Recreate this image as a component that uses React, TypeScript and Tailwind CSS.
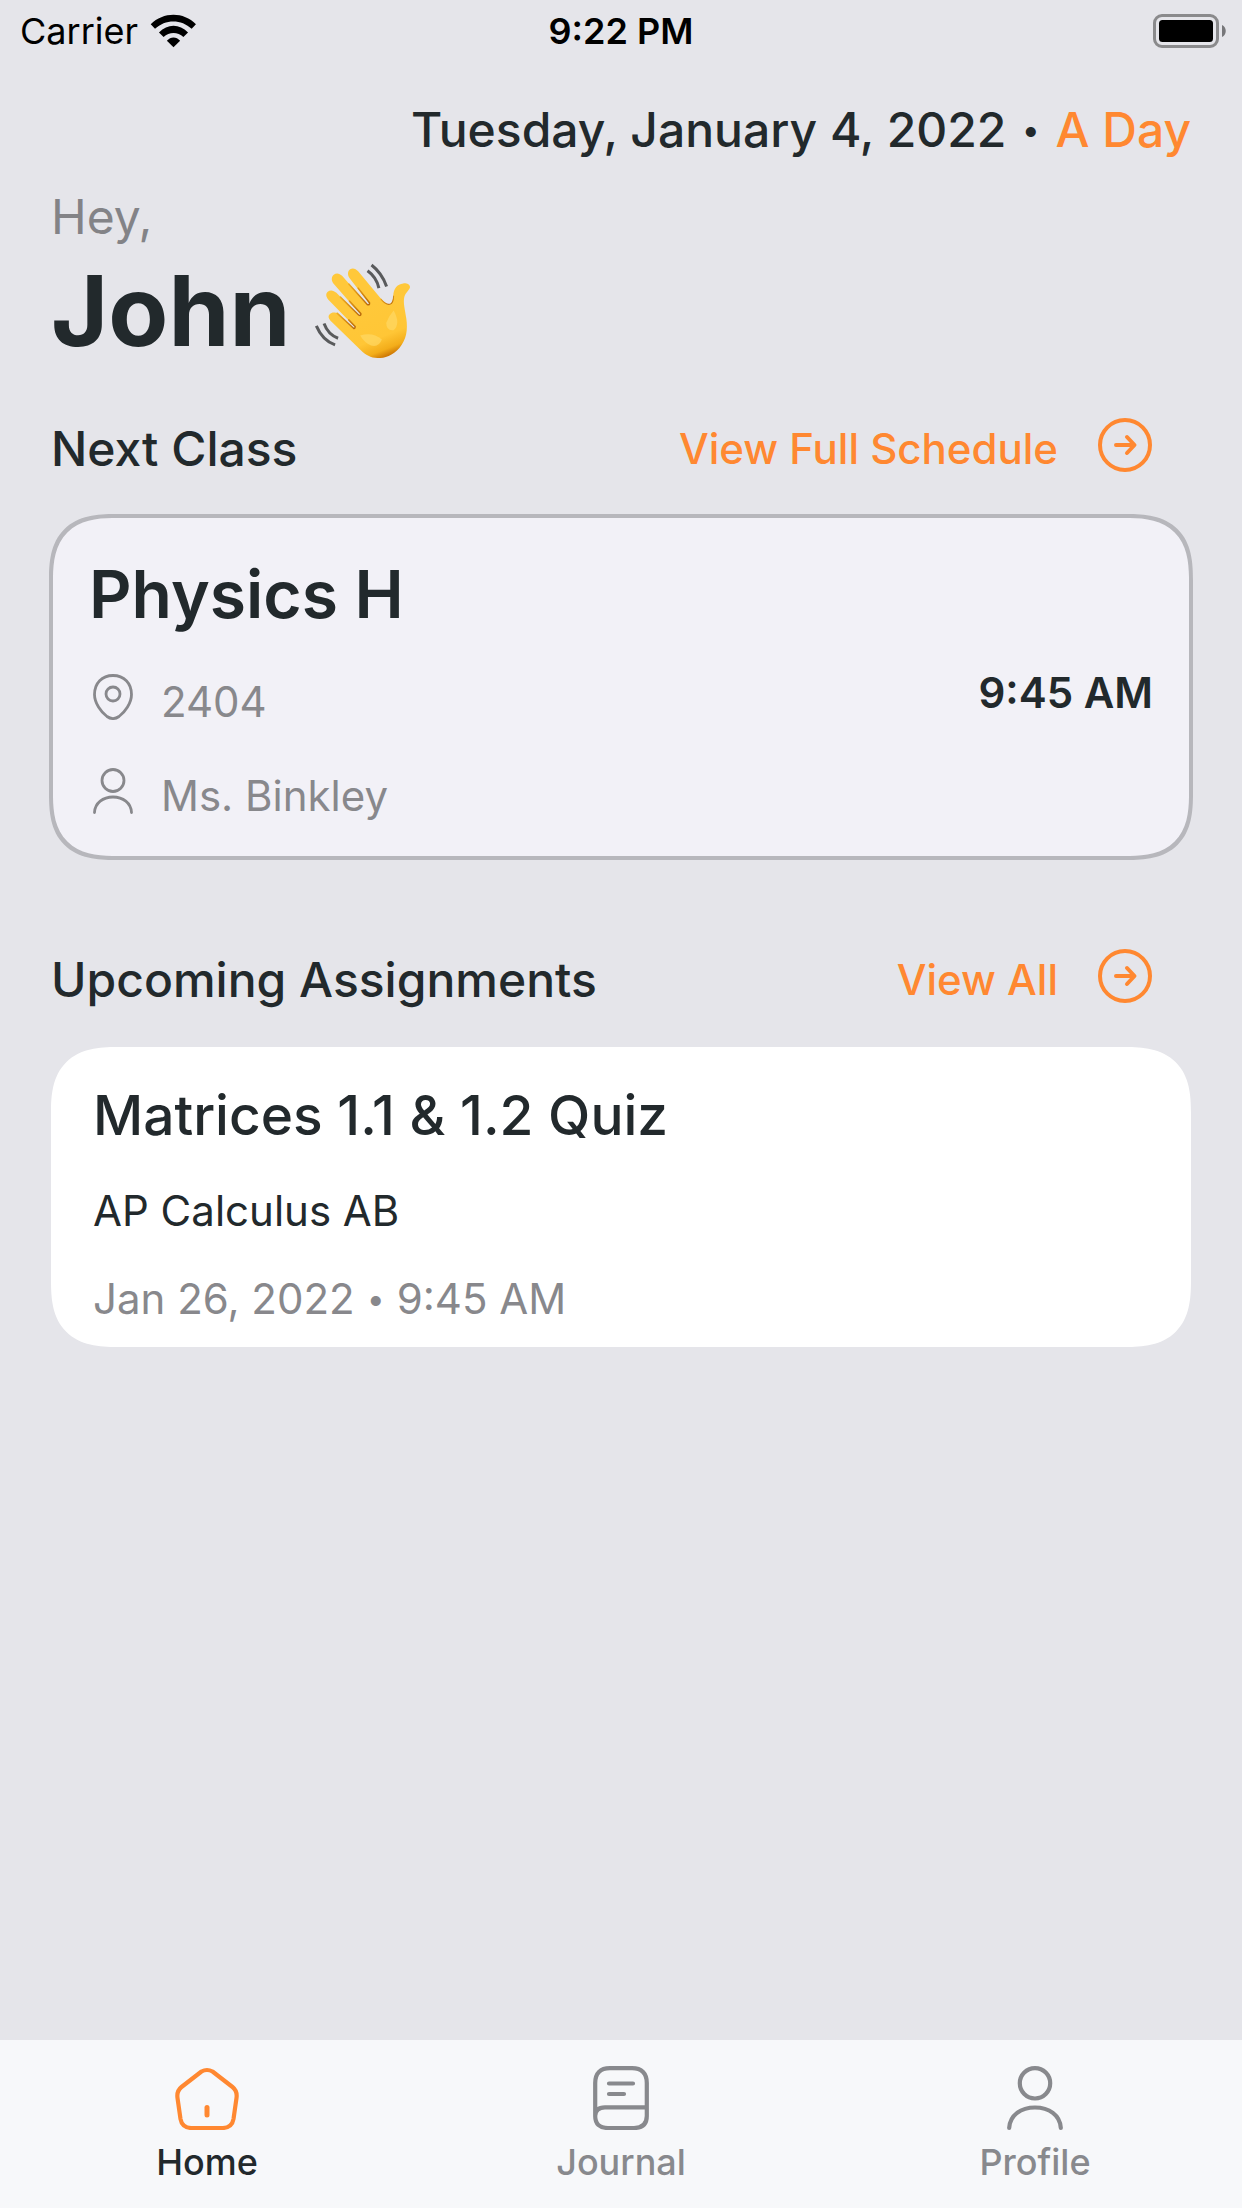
import type { ReactNode } from "react";

function WifiIcon() {
  return (
    <svg viewBox="445 37 142 103" className="h-[34px] w-[47px]" aria-hidden="true">
      <path d="M447 68C485 29.500 547 29.500 584 68L571 82C540 52 491 52 460 82Z" fill="#000" />
      <path d="M472 93C498 65.500 534 65.500 560 93L546 107C529 90 503 90 486 107Z" fill="#000" />
      <path d="M496 118C507 104.500 525 104.500 536 118L516 138Z" fill="#000" />
    </svg>
  );
}

function BatteryIcon() {
  return (
    <svg viewBox="0 0 74 34" className="h-[34px] w-[74px]" aria-hidden="true">
      <rect x="2.500" y="1.500" width="63" height="31" rx="7.500" fill="none" stroke="#8a8a8c" strokeWidth="3" />
      <rect x="7" y="6" width="54" height="22" rx="3.500" fill="#000" />
      <path d="M70 11c5 2 5 10 0 12z" fill="#77777a" />
    </svg>
  );
}

function WavingHand() {
  return (
    <svg viewBox="820 248 290 287" className="h-[96px] w-[97px]" role="img" aria-label="Waving hand">
      <defs>
        <linearGradient id="palm" gradientUnits="userSpaceOnUse" x1="950" y1="380" x2="1012" y2="536">
          <stop offset="0" stopColor="#ffc83a" />
          <stop offset="0.650" stopColor="#ffc636" />
          <stop offset="0.880" stopColor="#f3ad1a" />
          <stop offset="1" stopColor="#cf7a06" />
        </linearGradient>
        <linearGradient id="crease" x1="0" y1="0" x2="1" y2="1">
          <stop offset="0" stopColor="#f0ab20" />
          <stop offset="1" stopColor="#b8690a" />
        </linearGradient>
      </defs>
      <path
        d="M867 401C873 394 884 394 892 400L938 443L944 441L863 358C855 348 855 339 861 334C869 327 879 330 887 337L955 406L961 404L878 309C871 300 872 289 879 283C887 276 897 279 904 286L981 374L987 372L926 293C919 283 921 272 928 267C936 261 945 265 952 273L1016 350C1028 366 1038 373 1046 371C1055 368 1056 359 1057 345C1058 325 1068 311 1087 309C1098 308 1107 313 1107 320C1107 327 1094 336 1090 350C1086 368 1092 387 1096 414C1101 449 1096 477 1076 501C1055 525 1032 532 1010 532C989 532 975 523 960 509L874 425C863 414 861 407 867 401Z"
        fill="url(#palm)"
      />
      <g fill="none" stroke="url(#crease)" strokeWidth="4.500" strokeLinecap="round">
        <path d="M889 398L938 443Q943 445 943 438L924 418" />
        <path d="M899 350L954 404Q961 407 960 399L926 362" />
        <path d="M924 311L979 372Q987 375 986 367L952 323" />
        <path d="M1020 356Q1036 375 1048 371Q1057 368 1058 347" strokeWidth="3" />
      </g>
      <path d="M1058 390Q1080 430 1058 449Q1036 452 1036 427Q1043 407 1058 390Z" fill="#ffda68" opacity="0.650" />
      <path d="M958 465Q995 453 1023 477Q1014 501 991 495Q972 488 958 465Z" fill="#ffda68" opacity="0.650" />
      <g fill="none" stroke="#595a5c" strokeWidth="9">
        <path d="M992 254Q1023 278 1037 318" />
        <path d="M980 271Q1007 290 1014 323" />
        <path d="M850 429Q862 462 892 473" />
        <path d="M827 436Q845 479 883 493" />
      </g>
    </svg>
  );
}

function ArrowCircleIcon() {
  return (
    <svg
      viewBox="0 0 54 54"
      className="mb-2 h-[54px] w-[54px]"
      fill="none"
      stroke="currentColor"
      strokeWidth="4"
      strokeLinecap="round"
      strokeLinejoin="round"
      aria-hidden="true"
    >
      <circle cx="27" cy="27" r="25" />
      <path d="M18 27H36M29 19L36.500 27L29 35" />
    </svg>
  );
}

function PinIcon() {
  return (
    <svg viewBox="0 0 40 46" className="h-[46px] w-10" fill="none" stroke="currentColor" strokeWidth="2.800" aria-hidden="true">
      <path d="M20 1.500C31 1.500 38.500 9 38.500 20.500C38.500 29 32 38 26 42.500C22 45.300 18 45.300 14 42.500C8 38 1.500 29 1.500 20.500C1.500 9 9 1.500 20 1.500Z" />
      <circle cx="20" cy="20" r="7" />
    </svg>
  );
}

function PersonIcon() {
  return (
    <svg viewBox="0 0 40 46" className="h-[46px] w-10" fill="none" stroke="currentColor" strokeWidth="2.800" strokeLinecap="round" aria-hidden="true">
      <circle cx="20" cy="12.500" r="11" />
      <path d="M1.500 44.500C2 35 10 29 20 29C30 29 38 35 38.500 44.500" />
    </svg>
  );
}

function HomeIcon() {
  return (
    <svg viewBox="0 0 64 64" className="h-16 w-16" fill="none" stroke="currentColor" strokeWidth="4.200" strokeLinecap="round" strokeLinejoin="round" aria-hidden="true">
      <path d="M26.500 5.500Q32 2.500 37.500 5.500L57.500 21Q62.500 25 61.500 32L58.500 53Q57 61.500 48 62H16Q7 61.500 5.500 53L2.500 32Q1.500 25 6.500 21Z" />
      <path d="M32 41.500V49" strokeWidth="5" />
    </svg>
  );
}

function JournalIcon() {
  return (
    <svg viewBox="0 0 56 64" className="h-16 w-14" fill="none" stroke="currentColor" strokeWidth="4.200" strokeLinecap="round" strokeLinejoin="round" aria-hidden="true">
      <path d="M2.200 50V17Q2.200 2.200 17 2.200H39Q53.800 2.200 53.800 17V50Q53.800 62 41 62H15Q2.200 62 2.200 50Q2.200 41.300 12 41.300H53.500" />
      <path d="M16 17.500H40M16 28H31" />
    </svg>
  );
}

function ProfileIcon() {
  return (
    <svg viewBox="0 0 56 64" className="h-16 w-14" fill="none" stroke="currentColor" strokeWidth="4.200" strokeLinecap="round" aria-hidden="true">
      <circle cx="28" cy="17.300" r="15.200" />
      <path d="M2.200 61.800C3 49 14 41.500 28 41.500C42 41.500 53 49 53.800 61.800" />
    </svg>
  );
}

function SectionHeader({ title, action }: { title: string; action: string }) {
  return (
    <div className="flex h-14 items-center justify-between pr-[39px]">
      <h2 className="text-[48px] font-medium">{title}</h2>
      <a href="#" className="flex items-center gap-10 text-[42px] font-medium text-[#ff8831]">
        {action}
        <ArrowCircleIcon />
      </a>
    </div>
  );
}

function Tab({ label, icon, active }: { label: string; icon: ReactNode; active?: boolean }) {
  return (
    <a
      href="#"
      aria-current={active ? "page" : undefined}
      className={`flex flex-col items-center gap-2.5 ${active ? "text-[#ff8831]" : "text-[#88898d]"}`}
    >
      {icon}
      <span className={`text-[36px] leading-11 font-medium ${active ? "text-[#22292c]" : ""}`}>{label}</span>
    </a>
  );
}

export default function App() {
  return (
    <div className="flex min-h-screen flex-col bg-[#e5e5ea] font-['Inter',sans-serif] text-[#22292c]">
      <header className="grid h-[62px] grid-cols-3 items-center px-4 text-[36px] text-black">
        <div className="flex items-center gap-3 pl-1">
          Carrier
          <WifiIcon />
        </div>
        <time className="text-center font-semibold">9:22 PM</time>
        <div className="flex justify-end">
          <BatteryIcon />
        </div>
      </header>

      <main className="flex flex-1 flex-col px-[51px] leading-14">
        <p className="mt-10 flex items-center justify-end gap-4 text-[48px] font-medium">
          <span>Tuesday, January 4, 2022</span>
          <span className="text-[32px]">•</span>
          <span className="text-[#ff8831]">A Day</span>
        </p>
        <p className="mt-[31px] text-[48px] text-[#838387]">Hey,</p>
        <h1 className="mt-2.5 flex h-28 items-center gap-6 text-[98px] font-bold">
          John
          <WavingHand />
        </h1>

        <section className="mt-[54px]">
          <SectionHeader title="Next Class" action="View Full Schedule" />
          <article className="-mx-0.5 mt-[37px] flex items-center justify-between rounded-[66px] border-4 border-[#b7b7bc] bg-[#f2f1f7] pt-9 pr-9 pb-8 pl-9 [corner-shape:superellipse(1.4)]">
            <div>
              <h3 className="text-[66px] leading-20 font-semibold">Physics H</h3>
              <p className="mt-10 flex gap-7 pl-1 text-[42px] text-[#88888c]">
                <PinIcon />
                2404
              </p>
              <p className="mt-[38px] flex gap-7 pl-1 text-[42px] text-[#88888c]">
                <PersonIcon />
                Ms. Binkley
              </p>
            </div>
            <time className="pt-2 text-[42px] font-semibold">9:45 AM</time>
          </article>
        </section>

        <section className="mt-[92px]">
          <SectionHeader title="Upcoming Assignments" action="View All" />
          <article className="mt-[39px] rounded-[66px] bg-white px-[42px] pt-9 pb-5 [corner-shape:superellipse(1.4)]">
            <h3 className="text-[55px] leading-16 font-medium">Matrices 1.1 &amp; 1.2 Quiz</h3>
            <p className="mt-9 text-[42px]">AP Calculus AB</p>
            <p className="mt-8 flex items-center gap-3 text-[42px] text-[#88888c]">
              <span>Jan 26, 2022</span>
              <span className="text-[32px]">•</span>
              <span>9:45 AM</span>
            </p>
          </article>
        </section>
      </main>

      <nav className="grid grid-cols-3 bg-[#f7f8fa] pt-[26px] pb-6">
        <Tab label="Home" icon={<HomeIcon />} active />
        <Tab label="Journal" icon={<JournalIcon />} />
        <Tab label="Profile" icon={<ProfileIcon />} />
      </nav>
    </div>
  );
}
